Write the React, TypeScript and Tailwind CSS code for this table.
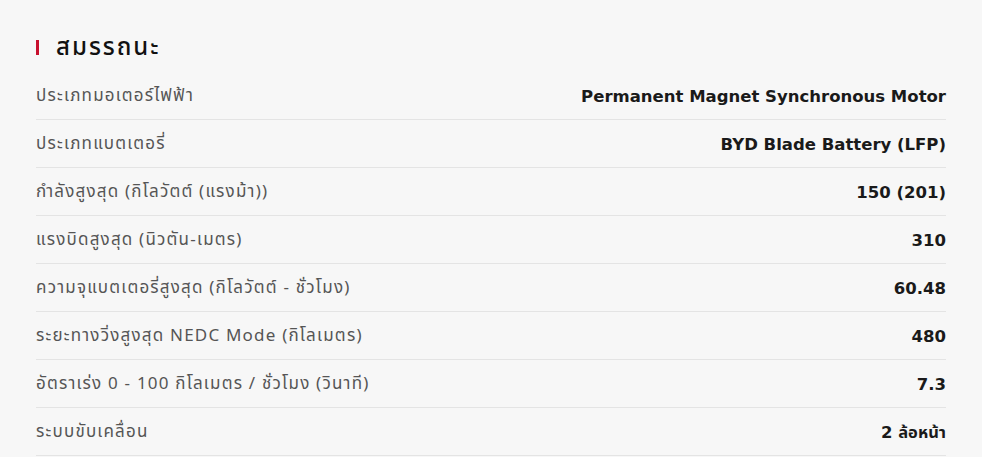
const specs = [
  { label: "ประเภทมอเตอร์ไฟฟ้า", value: "Permanent Magnet Synchronous Motor" },
  { label: "ประเภทแบตเตอรี่", value: "BYD Blade Battery (LFP)" },
  { label: "กำลังสูงสุด (กิโลวัตต์ (แรงม้า))", value: "150 (201)" },
  { label: "แรงบิดสูงสุด (นิวตัน-เมตร)", value: "310" },
  { label: "ความจุแบตเตอรี่สูงสุด (กิโลวัตต์ - ชั่วโมง)", value: "60.48" },
  { label: "ระยะทางวิ่งสูงสุด NEDC Mode (กิโลเมตร)", value: "480" },
  { label: "อัตราเร่ง 0 - 100 กิโลเมตร / ชั่วโมง (วินาที)", value: "7.3" },
  { label: "ระบบขับเคลื่อน", value: "2 ล้อหน้า" },
];

export default function App() {
  return (
    <div className="min-h-[457px] w-full bg-[#f7f7f7] px-9 pt-[33px] font-['DejaVu_Sans','Noto_Sans_Thai',sans-serif]">
      {/* Section title */}
      <div className="flex h-[28px] items-center gap-[17px]">
        <span className="h-[15px] w-[3px] bg-[#c8102e]" />
        <h2 className="text-[24px] font-medium leading-none tracking-[2px] text-[#111]">สมรรถนะ</h2>
      </div>

      <div className="mt-[11px]">
        {specs.map((s) => (
          <div
            key={s.label}
            className="flex h-[48px] items-center justify-between border-b border-[#e4e4e4] pt-[3px]"
          >
            <span className="font-['Noto_Sans_Thai','Liberation_Sans',sans-serif] text-[17px] tracking-[1.2px] text-[#555]">
              {s.label}
            </span>
            <span className="text-[16.5px] font-bold text-[#1a1a1a]">{s.value}</span>
          </div>
        ))}
      </div>
    </div>
  );
}
